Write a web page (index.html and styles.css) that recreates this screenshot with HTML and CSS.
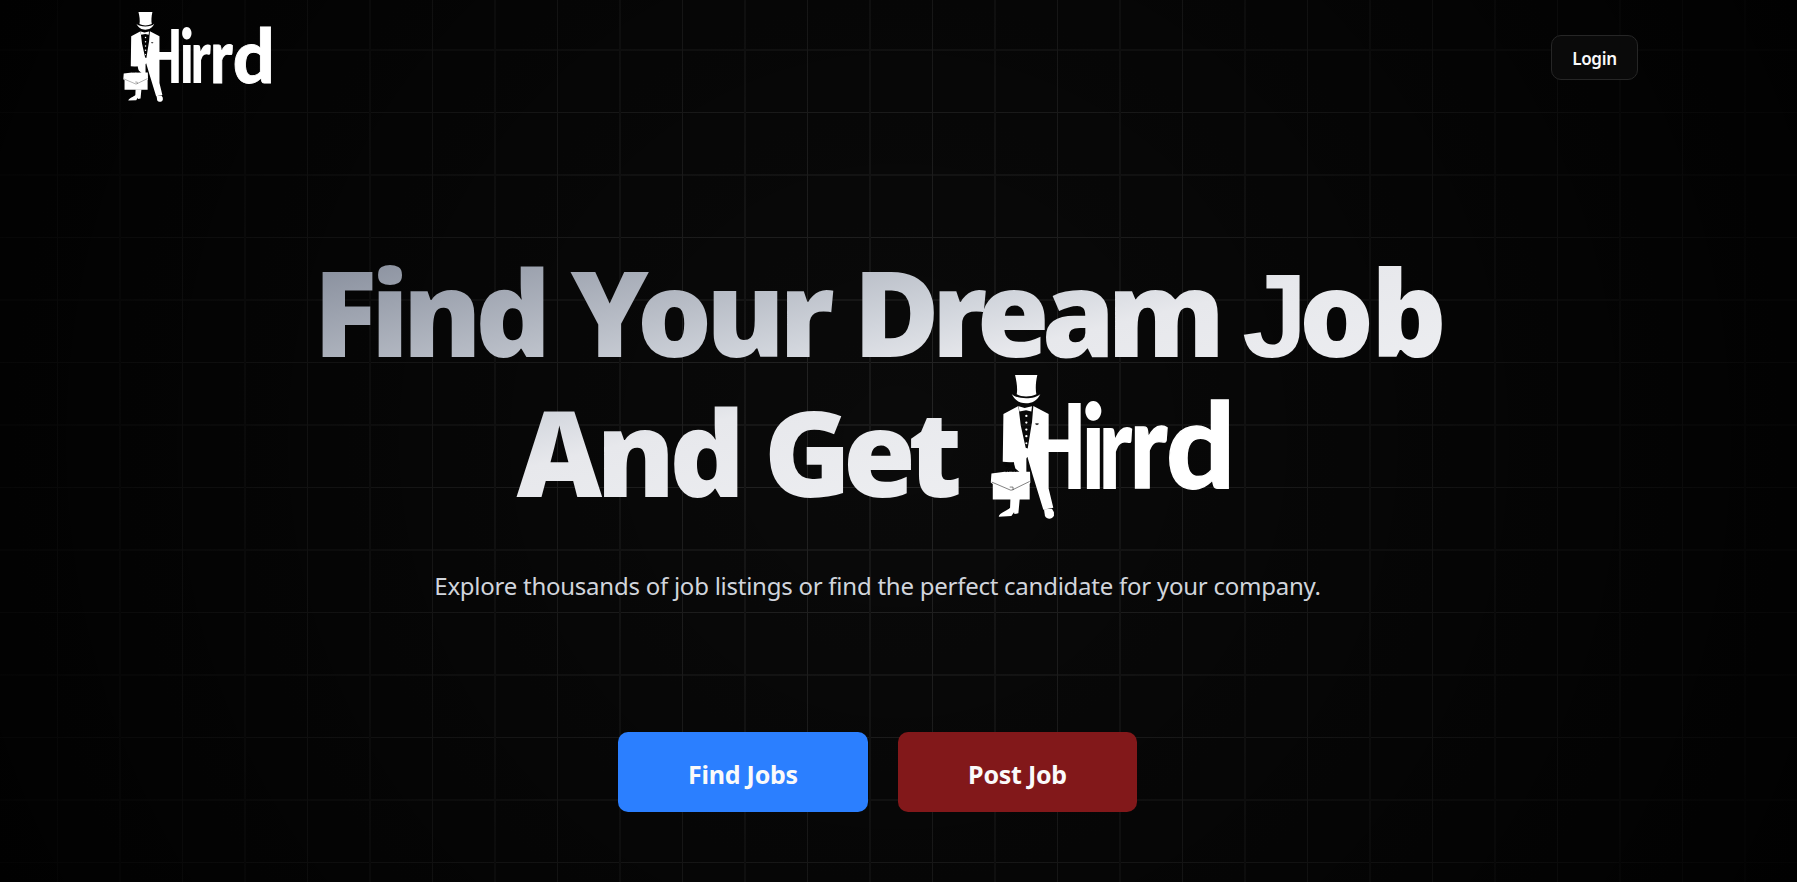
FILE: index.html
```html
<!DOCTYPE html>
<html lang="en">
<head>
<meta charset="utf-8">
<title>Hirrd</title>
<link rel="stylesheet" href="styles.css">
</head>
<body>
<svg class="defs" width="0" height="0" aria-hidden="true">
  <defs>
    <clipPath id="right-of-coat"><rect x="200" y="100" width="200" height="300"/></clipPath>
    <symbol id="logo" viewBox="33 29 716 433">
      <g fill="#fff">
        <path d="M107 29H174C169 50 168 72 171 87C152 96 128 96 112 87C115 70 112 50 107 29Z"/>
        <path d="M97 86C112 103 168 103 183 86C173 107 158 114 140 114S108 107 97 86Z"/>
        <path d="M117 122L72 146L70 290L103 292L108 310L122 322H141V280L144 275L160 330L192 434L222 428L208 370V146L162 122L158 170L145 250L139 248L124 180Z"/>
        <path d="M118 123L136 128L158 123L156 139L140 135L120 139Z"/>
        <circle cx="141" cy="152" r="3.5"/><circle cx="141" cy="172" r="3.5"/><circle cx="141" cy="193" r="3.5"/><circle cx="141" cy="213" r="3.5"/><circle cx="141" cy="234" r="3"/>
        <path d="M36 325L76 320H152L153 352L151 357V403H40V357L34 352Z"/>
        <path d="M93 402L92 428C84 438 60 442 58 455L96 453L104 442L105 447L117 445L121 402Z"/>
        <path d="M194 433L197 453C203 464 218 464 224 452V442L218 431Z"/>
      </g>
      <g fill="none" stroke="#050505">
        <path stroke-width="5" d="M73 298L104 294M78 303H104"/>
        <path stroke-width="3" d="M80 321C80 300 108 300 109 320M87 320C89 309 100 309 101 320"/>
        <path stroke-width="1.5" d="M37 351L93 375H98L151 349M91 366H101V375"/>
        <path stroke-width="3" d="M168 176H178M171 178H175"/>
      </g>
      <g class="wordmark">
        <text x="135" y="371" textLength="184" lengthAdjust="spacingAndGlyphs" clip-path="url(#right-of-coat)">H</text>
        <text x="306" y="371" textLength="68" lengthAdjust="spacingAndGlyphs">i</text>
        <text x="357" y="371" textLength="98" lengthAdjust="spacingAndGlyphs">r</text>
        <text class="round" x="452" y="369" textLength="108" lengthAdjust="spacingAndGlyphs">r</text>
        <text class="round" x="561" y="369" textLength="202" lengthAdjust="spacingAndGlyphs">d</text>
      </g>
    </symbol>
  </defs>
</svg>
<div class="grid-background"></div>
<div class="page">
  <header class="navbar">
    <svg class="logo logo-small" role="img" aria-label="Hirrd"><use href="#logo"/></svg>
    <button class="login">Login</button>
  </header>
  <main class="hero">
    <h1 class="title">
      <span class="line line-one"><span><span class="find-word">Find</span> Your <span class="dream">Dream</span> <span class="job"><span class="cap-j">J</span>ob</span></span></span>
      <span class="line line-two"><span class="and-get">And <span class="get">Get</span></span><svg class="logo logo-large" role="img" aria-label="Hirrd"><use href="#logo"/></svg></span>
    </h1>
    <p class="subtitle">Explore thousands of job listings or find the perfect candidate for your company.</p>
    <div class="actions">
      <button class="action find">Find Jobs</button>
      <button class="action post">Post Job</button>
    </div>
  </main>
</div>
</body>
</html>
```
FILE: styles.css
```css
* { box-sizing: border-box; }
body {
  margin: 0;
  height: 882px;
  overflow: hidden;
  background: #000;
  color: #fafafa;
  font-family: "Noto Sans", "Open Sans", sans-serif;
}
.defs { position: absolute; }
.grid-background {
  position: absolute;
  inset: 0;
  z-index: -1;
  background:
    radial-gradient(circle at center, transparent 0%, rgba(0,0,0,.9) 100%),
    repeating-linear-gradient(90deg, transparent 0 57px, #252525 57px 58px, transparent 58px 119px, #191919 119px 121px, transparent 121px 125px),
    repeating-linear-gradient(180deg, transparent 0 49px, #191919 49px 51px, transparent 51px 112px, #252525 112px 113px, transparent 113px 125px),
    #0a0a0a;
}
.page { display: flex; flex-direction: column; }
.navbar {
  display: flex;
  justify-content: space-between;
  align-items: center;
  height: 115px;
  padding: 0 159px 0 123px;
}
.logo { display: block; flex: none; }
.logo-small { width: 149px; height: 90px; margin-bottom: 1px; }
.logo-large { width: 239px; height: 144px; }
.wordmark {
  fill: #fff;
  font-family: Lato, sans-serif;
  font-weight: 900;
  font-size: 355px;
}
.wordmark .round { stroke: #fff; stroke-width: 4px; }
button {
  border: 0;
  border-radius: 10px;
  font-family: inherit;
  color: #fafafa;
}
.login {
  width: 87px;
  height: 45px;
  padding-top: 3px;
  border: 1px solid #262626;
  background: #0a0a0a;
  font-size: 17px;
  font-weight: 600;
  letter-spacing: -.3px;
}
.hero {
  display: flex;
  flex-direction: column;
  align-items: center;
  width: 1755px;
  padding-top: 127px;
}
.title {
  display: flex;
  flex-direction: column;
  width: 1148px;
  height: 280px;
  margin: 0;
  font-size: 118px;
  font-weight: 900;
  line-height: 140px;
  letter-spacing: -6px;
  color: transparent;
  background: linear-gradient(to bottom right, #7f8695 0%, #d1d5dc 40%, #e7e8ec 50%, #f3f4f6 100%);
  background-clip: text;
  -webkit-background-clip: text;
}
.line { display: flex; height: 140px; white-space: nowrap; }
.line-one { padding-left: 10px; }
.line-two { padding-left: 213px; }
.line-two .logo-large { margin: -7px 0 0 36px; }
.find-word { margin-right: 1px; letter-spacing: -6.4px; }
.dream { letter-spacing: -8px; }
.get { letter-spacing: -8px; }
.job { letter-spacing: -3px; }
.cap-j {
  display: inline-block;
  width: 57px;
  font-family: "Liberation Sans", sans-serif;
  letter-spacing: 0;
}
.subtitle {
  margin: 46px 0 0;
  color: #d1d5dc;
  font-size: 24px;
  line-height: 36px;
  letter-spacing: -.25px;
  white-space: nowrap;
}
.actions { display: flex; gap: 30px; margin-top: 128px; }
.action {
  width: 239px;
  height: 80px;
  padding-top: 4px;
  font-size: 25px;
  font-weight: 700;
  letter-spacing: -.25px;
}
.find { width: 250px; background: #2b7fff; }
.post { background: #82181a; }
```
